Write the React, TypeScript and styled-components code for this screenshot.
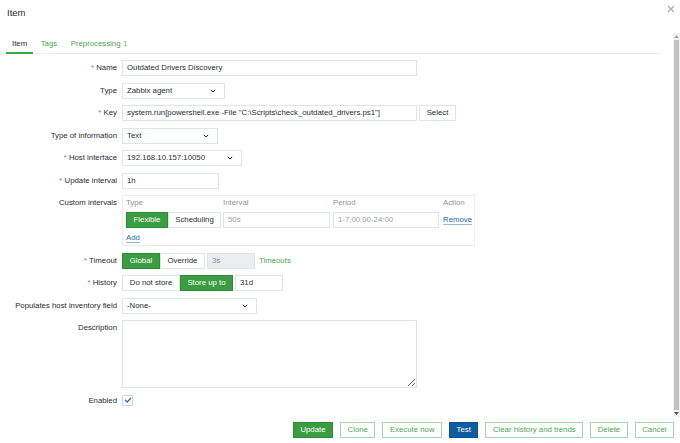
import styled, { createGlobalStyle } from 'styled-components';

const Global = createGlobalStyle`
  html, body { margin: 0; padding: 0; background: #fff; }
  body { font-family: "Liberation Sans", Arial, sans-serif; color: #1f2c33; }
  * { box-sizing: border-box; }
`;

const GREEN = '#3b9c41';
const GREEN_TEXT = '#4da453';
const BLUE_LINK = '#2a6ead';
const BORDER = '#dfe4e7';

const Dialog = styled.div`
  width: 680px;
  height: 443px;
  display: flex;
  flex-direction: column;
  overflow: hidden;
  background: #fff;
  font-size: 7.8px;
`;

const Header = styled.div`
  height: 33px;
  display: flex;
  justify-content: space-between;
  align-items: flex-start;
  padding: 8px 4px 0 7px;
`;

const Title = styled.h4`
  margin: 0;
  font-size: 9.5px;
  font-weight: normal;
  line-height: 10px;
`;

const CloseBtn = styled.span`
  width: 10px;
  height: 10px;
  display: flex;
  align-items: center;
  justify-content: center;
  margin-top: -4px;
`;

const Body = styled.div`
  flex: 1;
  display: flex;
  min-height: 0;
`;

const Main = styled.div`
  flex: 1;
  display: flex;
  flex-direction: column;
`;

const TabBar = styled.div`
  height: 21px;
  display: flex;
  align-items: flex-end;
  gap: 1.5px;
  padding-left: 6px;
  margin-right: 13px;
  border-bottom: 1px solid #ebeef0;
`;

const Tab = styled.span<{ $active?: boolean }>`
  padding: 0 6px;
  height: 15px;
  line-height: 10px;
  margin-bottom: -1px;
  color: ${(p) => (p.$active ? '#1f2c33' : GREEN_TEXT)};
  border-bottom: 2px solid ${(p) => (p.$active ? '#3aaa45' : 'transparent')};
`;

const Count = styled.span`
  font-size: 6.5px;
  margin-left: 3px;
  color: #6b9f70;
`;

const Form = styled.div`
  display: grid;
  grid-template-columns: 117px auto;
  column-gap: 5px;
  row-gap: 6.5px;
  align-items: start;
  padding-top: 6px;
`;

const Label = styled.label<{ $required?: boolean; $short?: boolean }>`
  text-align: right;
  line-height: ${(p) => (p.$short ? '12px' : '16px')};
  white-space: nowrap;
  &::before {
    content: ${(p) => (p.$required ? "'* '" : "''")};
    color: #e45959;
  }
`;

const Field = styled.div`
  display: flex;
  align-items: center;
  gap: 2px;
`;

const Input = styled.div<{ $w: number; $muted?: boolean; $disabled?: boolean }>`
  width: ${(p) => p.$w}px;
  height: 16px;
  line-height: 14px;
  padding: 0 4px;
  border: 1px solid ${BORDER};
  background: ${(p) => (p.$disabled ? '#ebeef0' : '#fff')};
  color: ${(p) => (p.$muted ? '#9aa0a4' : p.$disabled ? '#768d99' : '#1f2c33')};
  white-space: nowrap;
  overflow: hidden;
`;

const SelectBox = styled(Input)`
  display: flex;
  align-items: center;
  justify-content: space-between;
  padding-right: 8px;
`;

const Btn = styled.span<{ $w?: number }>`
  height: 16px;
  line-height: 14px;
  padding: 0 7px;
  border: 1px solid ${BORDER};
  background: #fff;
  text-align: center;
  ${(p) => (p.$w ? `width: ${p.$w}px; padding: 0;` : '')}
`;

const Segmented = styled.div`
  display: flex;
`;

const Seg = styled.span<{ $on?: boolean; $w: number }>`
  width: ${(p) => p.$w}px;
  height: 16px;
  line-height: 14px;
  text-align: center;
  border: 1px solid ${(p) => (p.$on ? '#2e8c35' : BORDER)};
  background: ${(p) => (p.$on ? GREEN : '#fff')};
  color: ${(p) => (p.$on ? '#fff' : '#1f2c33')};
`;

const GreenLink = styled.span`
  color: ${GREEN_TEXT};
  margin-left: 2px;
`;

const IntervalBox = styled.div`
  width: 353px;
  height: 51px;
  border: 1px solid #ebeef0;
  padding: 2px 3px 0 3px;
  display: grid;
  grid-template-columns: 97px 110px 110px auto;
  grid-template-rows: 10px 16px 14px;
  row-gap: 4px;
  align-items: center;
`;

const ColHead = styled.span`
  color: #8a959b;
  line-height: 10px;
`;

const BlueLink = styled.span<{ $top?: boolean }>`
  color: ${BLUE_LINK};
  justify-self: start;
  line-height: 9px;
  border-bottom: 1px solid #9bbad6;
  ${(p) => (p.$top ? 'align-self: start; margin-top: 1px;' : '')}
`;

const TextArea = styled.textarea`
  width: 295px;
  height: 68px;
  border: 1px solid ${BORDER};
  margin: 0;
  padding: 2px 4px;
  font: inherit;
  resize: both;
  display: block;
`;

const Check = styled.span`
  width: 11px;
  height: 11px;
  border: 1px solid #cdd5da;
  border-radius: 1px;
  display: flex;
  align-items: center;
  justify-content: center;
`;

const Scrollbar = styled.div`
  width: 7px;
  display: flex;
  flex-direction: column;
  align-items: center;
  background: #f1f1f1;
`;

const Arrow = styled.div`
  height: 7px;
  width: 7px;
  display: flex;
  align-items: center;
  justify-content: center;
`;

const Thumb = styled.div`
  flex: 1;
  width: 5px;
  background: #c1c1c1;
`;

const Footer = styled.div`
  height: 26px;
  display: flex;
  justify-content: flex-end;
  align-items: center;
  gap: 7px;
  padding-right: 6px;
`;

const FootBtn = styled.span<{ $kind?: 'green' | 'blue' }>`
  height: 16px;
  line-height: 14px;
  padding: 0 6.5px;
  border: 1px solid
    ${(p) => (p.$kind === 'green' ? '#2e8c35' : p.$kind === 'blue' ? '#0b5190' : '#a8d6ac')};
  background: ${(p) => (p.$kind === 'green' ? GREEN : p.$kind === 'blue' ? '#0f5c9e' : '#fff')};
  color: ${(p) => (p.$kind ? '#fff' : GREEN_TEXT)};
`;

const Chevron = () => (
  <svg width="6" height="4" viewBox="0 0 6 4">
    <polyline points="0.8,0.8 3,3 5.2,0.8" fill="none" stroke="#1f2c33" strokeWidth="1" />
  </svg>
);

const Select = ({ w, value }: { w: number; value: string }) => (
  <SelectBox $w={w}>
    <span>{value}</span>
    <Chevron />
  </SelectBox>
);

export default function App() {
  return (
    <>
      <Global />
      <Dialog>
        <Header>
          <Title>Item</Title>
          <CloseBtn>
            <svg width="8" height="8" viewBox="0 0 8 8">
              <path d="M1 1L7 7M7 1L1 7" stroke="#a3aab0" strokeWidth="1.2" />
            </svg>
          </CloseBtn>
        </Header>
        <Body>
          <Main>
            <TabBar>
              <Tab $active>Item</Tab>
              <Tab>Tags</Tab>
              <Tab>
                Preprocessing<Count>1</Count>
              </Tab>
            </TabBar>
            <Form>
              <Label $required>Name</Label>
              <Field>
                <Input $w={295}>Outdated Drivers Discovery</Input>
              </Field>

              <Label>Type</Label>
              <Field>
                <Select w={103} value="Zabbix agent" />
              </Field>

              <Label $required>Key</Label>
              <Field>
                <Input $w={295}>system.run[powershell.exe -File "C:\Scripts\check_outdated_drivers.ps1"]</Input>
                <Btn $w={37}>Select</Btn>
              </Field>

              <Label>Type of information</Label>
              <Field>
                <Select w={96} value="Text" />
              </Field>

              <Label $required>Host interface</Label>
              <Field>
                <Select w={120} value="192.168.10.157:10050" />
              </Field>

              <Label $required>Update interval</Label>
              <Field>
                <Input $w={97}>1h</Input>
              </Field>

              <Label>Custom intervals</Label>
              <IntervalBox>
                <ColHead>Type</ColHead>
                <ColHead>Interval</ColHead>
                <ColHead>Period</ColHead>
                <ColHead>Action</ColHead>
                <Segmented>
                  <Seg $on $w={42}>Flexible</Seg>
                  <Seg $w={53}>Scheduling</Seg>
                </Segmented>
                <Input $w={107} $muted>50s</Input>
                <Input $w={106} $muted>1-7,00:00-24:00</Input>
                <BlueLink>Remove</BlueLink>
                <BlueLink $top>Add</BlueLink>
              </IntervalBox>

              <Label $required>Timeout</Label>
              <Field>
                <Segmented>
                  <Seg $on $w={38}>Global</Seg>
                  <Seg $w={45}>Override</Seg>
                </Segmented>
                <Input $w={48} $disabled>3s</Input>
                <GreenLink>Timeouts</GreenLink>
              </Field>

              <Label $required>History</Label>
              <Field>
                <Segmented>
                  <Seg $w={58}>Do not store</Seg>
                  <Seg $on $w={53}>Store up to</Seg>
                </Segmented>
                <Input $w={48}>31d</Input>
              </Field>

              <Label>Populates host inventory field</Label>
              <Field>
                <Select w={135} value="-None-" />
              </Field>

              <Label>Description</Label>
              <Field>
                <TextArea defaultValue="" />
              </Field>

              <Label $short>Enabled</Label>
              <Field>
                <Check>
                  <svg width="8" height="6" viewBox="0 0 8 6">
                    <polyline points="1,2.8 3.2,5 7,1" fill="none" stroke="#1f6fc0" strokeWidth="1.3" />
                  </svg>
                </Check>
              </Field>
            </Form>
          </Main>
          <Scrollbar>
            <Arrow>
              <svg width="5" height="3" viewBox="0 0 5 3">
                <polygon points="0,3 2.5,0 5,3" fill="#a3a3a3" />
              </svg>
            </Arrow>
            <Thumb />
            <Arrow>
              <svg width="5" height="3" viewBox="0 0 5 3">
                <polygon points="0,0 2.5,3 5,0" fill="#505050" />
              </svg>
            </Arrow>
          </Scrollbar>
        </Body>
        <Footer>
          <FootBtn $kind="green">Update</FootBtn>
          <FootBtn>Clone</FootBtn>
          <FootBtn>Execute now</FootBtn>
          <FootBtn $kind="blue">Test</FootBtn>
          <FootBtn>Clear history and trends</FootBtn>
          <FootBtn>Delete</FootBtn>
          <FootBtn>Cancel</FootBtn>
        </Footer>
      </Dialog>
    </>
  );
}
